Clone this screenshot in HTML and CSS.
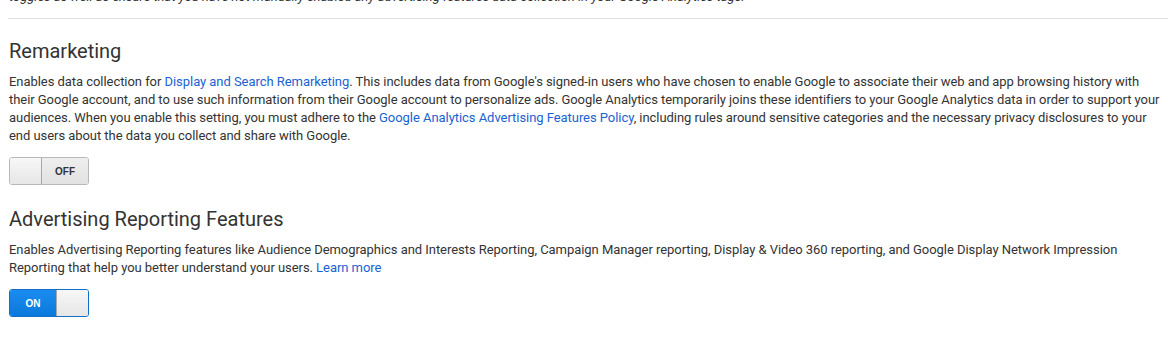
FILE: index.html
```html
<!DOCTYPE html>
<html lang="en">
<head>
  <meta charset="UTF-8" />
  <title>Data Collection Settings</title>
  <link rel="stylesheet" href="styles.css">
</head>
<body>
<main class="settings">
  <p class="note">toggles as well as ensure that you have not manually enabled any advertising features data collection in your Google Analytics tags.</p>
  <hr class="divider">

  <section class="setting">
    <h2>Remarketing</h2>
    <p>Enables data collection for <a href="#">Display and Search Remarketing</a>. This includes data from Google's signed-in users who have chosen to enable Google to associate their web and app browsing history with their Google account, and to use such information from their Google account to personalize ads. Google Analytics temporarily joins these identifiers to your Google Analytics data in order to support your audiences. When you enable this setting, you must adhere to the <a href="#">Google Analytics Advertising Features Policy</a>, including rules around sensitive categories and the necessary privacy disclosures to your end users about the data you collect and share with Google.</p>
    <button type="button" class="toggle off">
      <span class="knob"></span>
      <span class="label">OFF</span>
    </button>
  </section>

  <section class="setting">
    <h2>Advertising Reporting Features</h2>
    <p>Enables Advertising Reporting features like Audience Demographics and Interests Reporting, Campaign Manager reporting, Display &amp; Video 360 reporting, and Google Display Network Impression Reporting that help you better understand your users. <a href="#">Learn more</a></p>
    <button type="button" class="toggle on">
      <span class="label">ON</span>
      <span class="knob"></span>
    </button>
  </section>
</main>
</body>
</html>
```

FILE: styles.css
```css
body {
  margin: 0;
  font-family: Roboto, 'Noto Sans', sans-serif;
  color: #333;
  background: #fff;
}
.settings {
  padding-left: 8px;
}
.note {
  margin: -12px 0 0 1px;
  font-size: 13px;
  line-height: 18px;
  font-style: italic;
}
.divider {
  border: none;
  border-top: 1px solid #e0e0e0;
  margin: 12px 0 0;
}
.setting {
  padding-left: 1px;
}
.setting h2 {
  margin: 20px 0 0;
  font-size: 20px;
  font-weight: 400;
  line-height: 24px;
  color: #333;
}
.setting + .setting h2 {
  margin-top: 22px;
}
.setting p {
  margin: 10px 0 0;
  padding-right: 4px;
  font-size: 13px;
  line-height: 18px;
  letter-spacing: -0.05px;
}
.setting a {
  color: #1a62d2;
  text-decoration: none;
}
.toggle {
  display: flex;
  margin-top: 12px;
  padding: 0;
  width: 80px;
  height: 28px;
  border: 1px solid #b8b8b8;
  border-radius: 3px;
  overflow: hidden;
  cursor: pointer;
  font-family: 'Liberation Sans', Arial, sans-serif;
  background: none;
}
.toggle .knob {
  width: 31px;
  background: linear-gradient(#f7f7f7, #e6e6e6);
}
.toggle .label {
  flex: 1;
  display: flex;
  align-items: center;
  justify-content: center;
  font-size: 10px;
  font-weight: 700;
}
.toggle.off .knob {
  border-right: 1px solid #a8a8a8;
}
.toggle.off .label {
  background: linear-gradient(#eeeeee, #e2e2e2);
  color: #333;
}
.toggle.on {
  border-color: #1171c9;
}
.toggle.on .label {
  background: linear-gradient(#1a8cf0, #0b79dc);
  color: #fff;
}
.toggle.on .knob {
  border-left: 1px solid #a8a8a8;
}
```
